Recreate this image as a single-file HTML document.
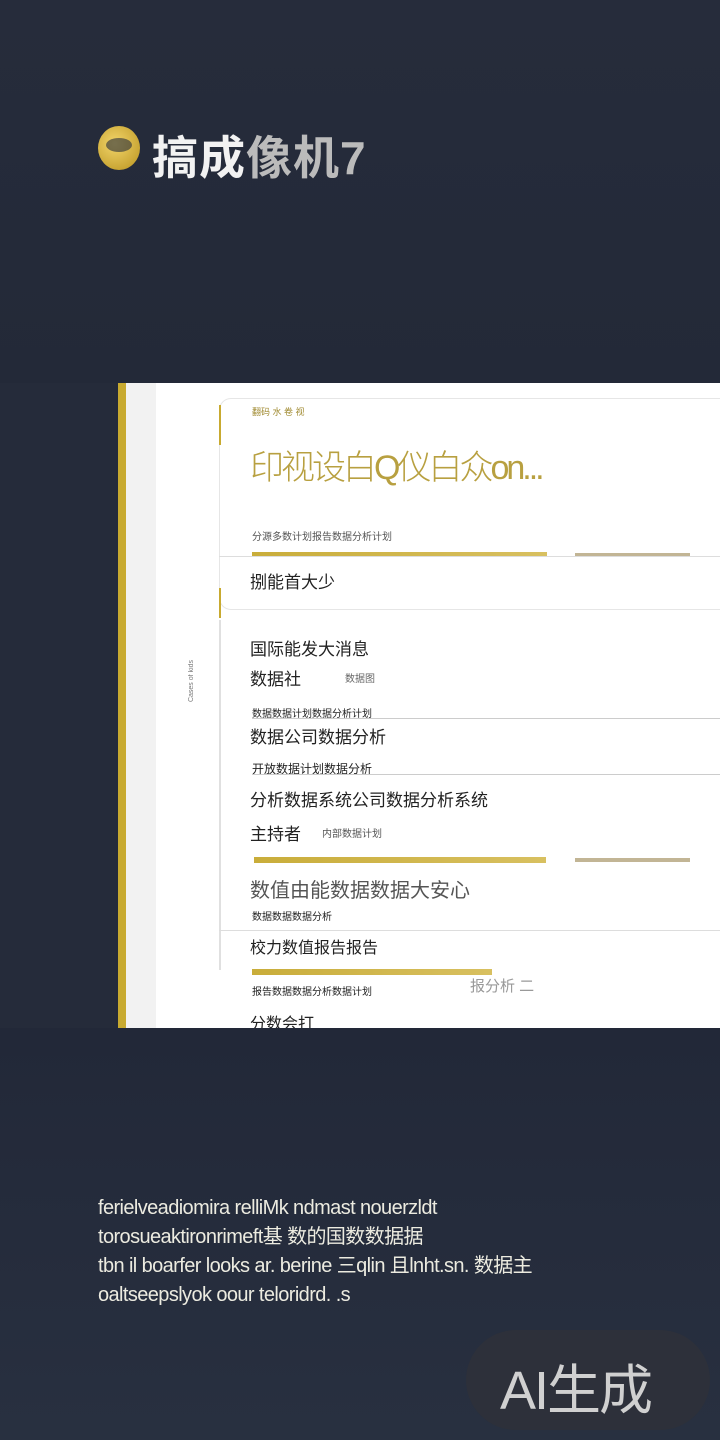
<!DOCTYPE html>
<html><head><meta charset="utf-8"><style>
*{margin:0;padding:0;box-sizing:border-box}
body{width:720px;height:1440px;background:#252b3a;position:relative;overflow:hidden;font-family:"Liberation Sans","Noto Sans CJK SC",sans-serif}
.a{position:absolute}
.cn{font-family:"Liberation Sans","Noto Sans CJK SC",sans-serif;color:#222;white-space:nowrap}
.gold{background:linear-gradient(90deg,#c9ad3a,#d8c060)}
.tan{background:#c2b595}
.line{height:1px;background:#ddd}
</style></head><body>
<div class="a" style="left:0;top:0;width:720px;height:383px;background:linear-gradient(180deg,#262c3b,#232938)"></div>
<div class="a" style="left:98px;top:126px;width:42px;height:44px;border-radius:50%;background:radial-gradient(circle at 40% 40%,#f2d56a,#b8921e)"></div>
<div class="a" style="left:106px;top:138px;width:26px;height:14px;border-radius:50%;background:#252b3a;opacity:.6"></div>
<div class="a cn" style="left:152px;top:122px;font-size:46px;font-weight:bold;color:#f2f2f2;letter-spacing:1px">搞成<span style="color:#bbb">像机7</span></div>

<div class="a" style="left:118px;top:383px;width:602px;height:645px;background:#fff"></div>
<div class="a" style="left:118px;top:383px;width:8px;height:645px;background:#c8aa30"></div>
<div class="a" style="left:126px;top:383px;width:30px;height:645px;background:#f2f2f2"></div>
<div class="a" style="left:219px;top:398px;width:520px;height:212px;border:1px solid #e6e6e6;border-radius:12px;background:#fff"></div>
<div class="a" style="left:219px;top:405px;width:2px;height:40px;background:#c8aa30"></div>
<div class="a cn" style="left:252px;top:405px;font-size:9px;color:#a08a30">翻码 水 卷 视</div>
<div class="a cn" style="left:250px;top:440px;font-size:34px;color:#b8a040;font-weight:300;letter-spacing:-3px">印视设白Q仪白众on...</div>
<div class="a cn" style="left:252px;top:528px;font-size:10px;color:#555">分源多数计划报告数据分析计划</div>
<div class="a gold" style="left:252px;top:552px;width:295px;height:5px"></div>
<div class="a tan" style="left:575px;top:553px;width:115px;height:4px"></div>
<div class="a line" style="left:219px;top:556px;width:501px"></div>
<div class="a cn" style="left:250px;top:568px;font-size:17px">捌能首大少</div>
<div class="a" style="left:219px;top:588px;width:2px;height:30px;background:#c8aa30"></div>

<div class="a" style="left:219px;top:620px;width:2px;height:350px;background:#e0e0e0"></div>
<div class="a cn" style="left:250px;top:635px;font-size:17px">国际能发大消息</div>
<div class="a cn" style="left:250px;top:665px;font-size:17px">数据社</div>
<div class="a cn" style="left:345px;top:670px;font-size:10px;color:#666">数据图</div>
<div class="a cn" style="left:252px;top:705px;font-size:10px">数据数据计划数据分析计划</div>
<div class="a line" style="left:252px;top:718px;width:468px;background:#ccc"></div>
<div class="a cn" style="left:250px;top:723px;font-size:17px">数据公司数据分析</div>
<div class="a cn" style="left:252px;top:760px;font-size:12px">开放数据计划数据分析</div>
<div class="a line" style="left:252px;top:774px;width:468px;background:#ccc"></div>
<div class="a cn" style="left:250px;top:786px;font-size:17px">分析数据系统公司数据分析系统</div>
<div class="a cn" style="left:250px;top:820px;font-size:17px">主持者</div>
<div class="a cn" style="left:322px;top:825px;font-size:10px;color:#555">内部数据计划</div>
<div class="a gold" style="left:254px;top:857px;width:292px;height:6px"></div>
<div class="a tan" style="left:575px;top:858px;width:115px;height:4px"></div>
<div class="a cn" style="left:250px;top:874px;font-size:20px;color:#555">数值由能数据数据大安心</div>
<div class="a cn" style="left:252px;top:908px;font-size:10px">数据数据数据分析</div>
<div class="a line" style="left:219px;top:930px;width:501px"></div>
<div class="a cn" style="left:250px;top:934px;font-size:16px">校力数值报告报告</div>
<div class="a gold" style="left:252px;top:969px;width:240px;height:6px"></div>
<div class="a cn" style="left:252px;top:983px;font-size:10px">报告数据数据分析数据计划</div>
<div class="a cn" style="left:470px;top:975px;font-size:15px;color:#999">报分析 二</div>
<div class="a cn" style="left:250px;top:1010px;font-size:16px">分数会打</div>
<div class="a cn" style="left:188px;top:660px;font-size:7px;color:#777;writing-mode:vertical-rl;transform:rotate(180deg)">Cases of kids</div>

<div class="a" style="left:0;top:1028px;width:720px;height:412px;background:linear-gradient(180deg,#222838,#283040)"></div>
<div class="a" style="left:98px;top:1194px;font-size:20px;line-height:29px;color:#ecebe0;letter-spacing:-0.6px;white-space:nowrap">ferielveadiomira relliMk ndmast nouerzldt<br>torosueaktironrimeft基 数的国数数据据<br>tbn il boarfer looks ar. berine 三qlin 且lnht.sn. 数据主<br>oaltseepslyok oour teloridrd. .s</div>
<div class="a" style="left:466px;top:1330px;width:244px;height:100px;border-radius:50px;background:rgba(45,48,58,.95)"></div>
<div class="a cn" style="left:500px;top:1346px;font-size:54px;color:#d0d0d0;letter-spacing:-2px">AI生成</div>
</body></html>
